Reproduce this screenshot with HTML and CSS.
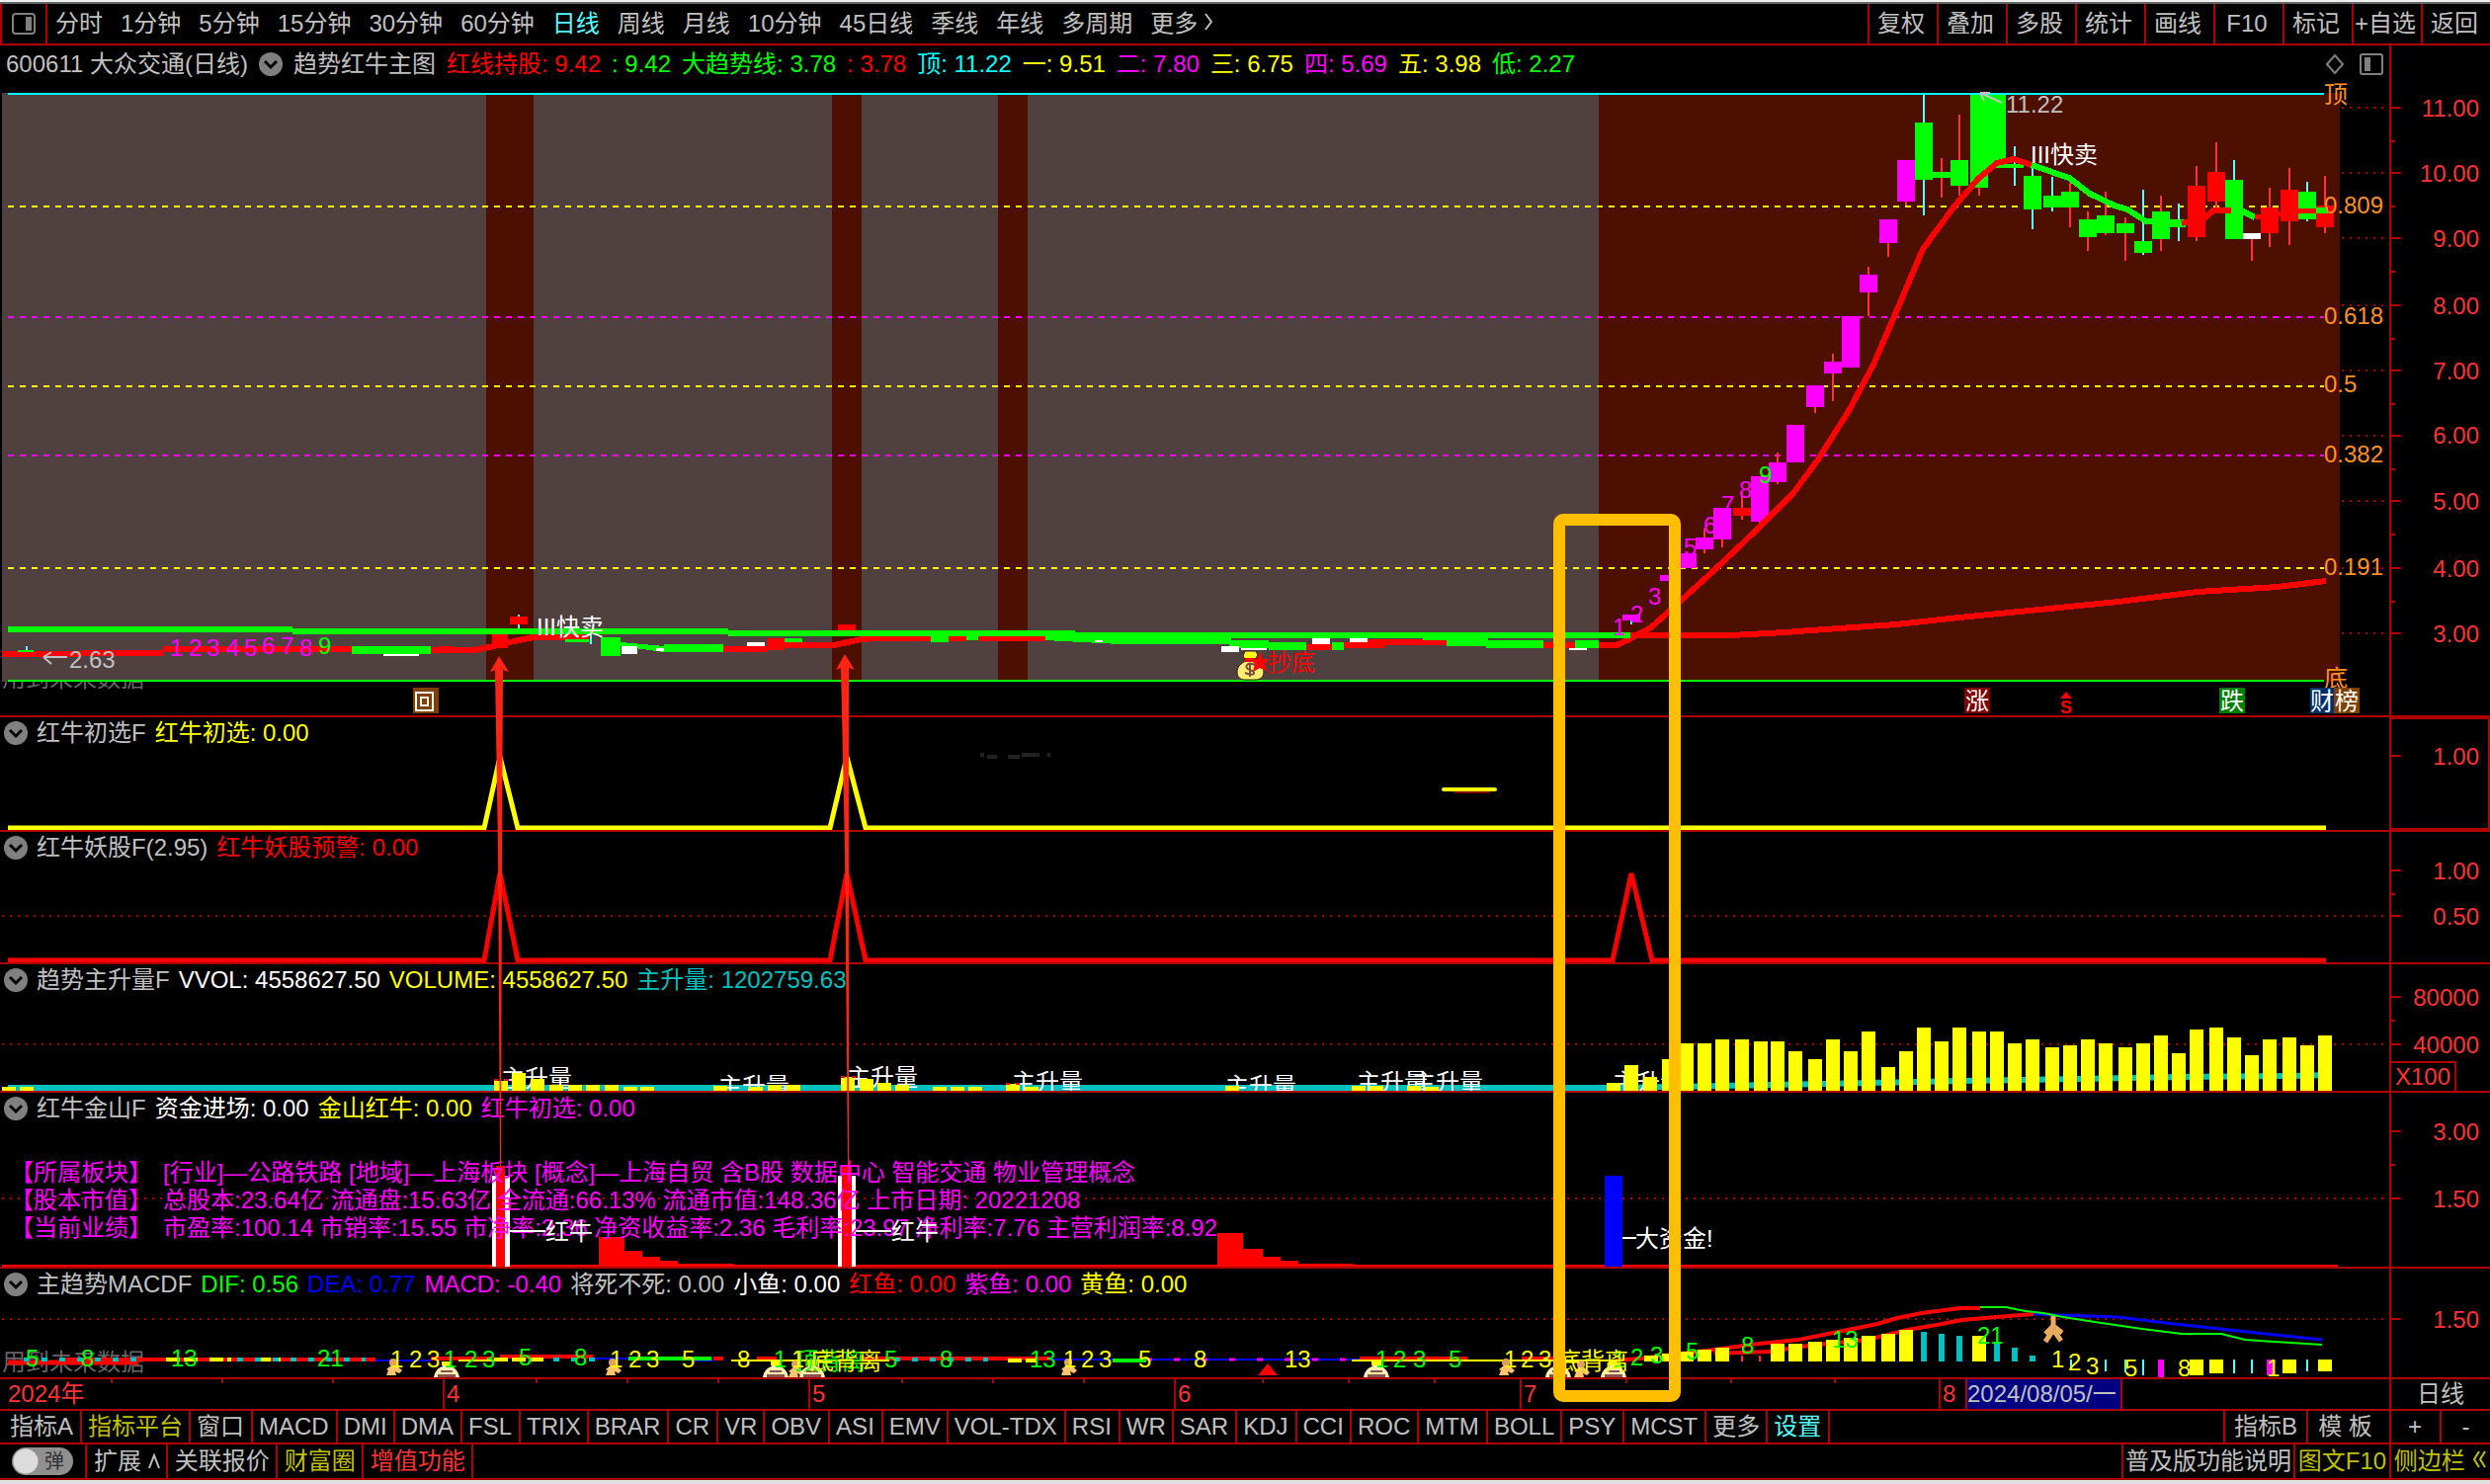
FILE: index.html
```html
<!DOCTYPE html>
<html lang="zh-CN">
<head>
<meta charset="utf-8">
<title>600611 大众交通 日线</title>
<link rel="stylesheet" href="styles.css">
</head>
<body>
<svg class="defs" aria-hidden="true">
  <defs>
    <symbol id="chev" viewBox="0 0 24 24"><circle cx="12" cy="12" r="12" fill="#808080"/><path d="M6 9l6 6 6-6" fill="none" stroke="#000" stroke-width="3"/></symbol>
    <g id="bag">
      <path d="M-6-17h11l2 4-4 6c7 3 10 8 10 11 0 6-4 8-9 8h-10c-5 0-8-3-8-8 0-5 4-9 9-11l-3-5z" fill="#ffee70" stroke="#302010" stroke-width="1"/>
      <path d="M-6-16h10v6h-10z" fill="#ff0"/><path d="M-6-10h10v4h-10z" fill="red"/>
      <path d="M4-3c-8-4-12 3-5 5 7 2 5 7-5 3M-1-5v14" fill="none" stroke="#7c4a40" stroke-width="2"/>
    </g>
    <g id="tee"><path d="M-5 0h10l-1 5c6 2 8 6 9 11h-26c1-5 3-9 9-11z" fill="#fff0b0"/><path d="M-5 0h10v4h-10z" fill="#ff0"/><path d="M-6 9h12v2h-12zM-9 13h18v3h-18z" fill="#8a5050"/></g>
    <g id="man"><circle r="4" cy="3" fill="#e0a060"/><path d="M-2 6h5l6 5-3 3-4-2 1 4h-10l2-5-2-1z" fill="#ffc468"/></g>
  </defs>
</svg>

<div class="strip"></div>
<nav class="toolbar">
  <button class="side" aria-label="侧栏"><svg width="24" height="22" viewBox="0 0 24 22"><rect x="1" y="1" width="22" height="20" rx="3" fill="none" stroke="#808080" stroke-width="2"/><path d="M14 4h6v14h-6z" fill="#808080"/></svg></button>
  <div class="periods">
    <button>分时</button><button>1分钟</button><button>5分钟</button><button>15分钟</button><button>30分钟</button><button>60分钟</button><button class="cyan">日线</button><button>周线</button><button>月线</button><button>10分钟</button><button>45日线</button><button>季线</button><button>年线</button><button>多周期</button><button>更多 <svg width="8" height="20" viewBox="0 0 8 20"><path d="M1 2l6 8-6 8" fill="none" stroke="#c0c0c0" stroke-width="2"/></svg></button>
  </div>
  <div class="tools">
    <button>复权</button><button>叠加</button><button>多股</button><button>统计</button><button>画线</button><button>F10</button><button>标记</button><button>+自选</button><button>返回</button>
  </div>
</nav>

<main class="charts">
<section class="panel main">
  <header class="head">
    <span>600611 大众交通(日线)</span><button aria-label="展开"><svg width="24" height="24"><use href="#chev"/></svg></button><span>趋势红牛主图</span>
    <span class="red">红线持股: 9.42</span><span class="lime">: 9.42</span><span class="lime">大趋势线: 3.78</span><span class="red">: 3.78</span><span class="aqua">顶: 11.22</span><span class="yellow">一: 9.51</span><span class="mag">二: 7.80</span><span class="yellow">三: 6.75</span><span class="mag">四: 5.69</span><span class="yellow">五: 3.98</span><span class="lime">低: 2.27</span>
  </header>
  <svg class="plot" viewBox="0 46 2520 678" preserveAspectRatio="none">
    <text x="2" y="695" fill="#666">用到未来数据</text>
    <rect x="2" y="94" width="2366" height="596" fill="#514040"/>
    <path d="M492 94h48v596h-48zM842 94h30v596h-30zM1010 94h30v596h-30zM1618 94h750v596h-750z" fill="#4d0f00"/>
    <path d="M2370 109h46M2370 175h46M2370 241h46M2370 309h46M2370 375h46M2370 441h46M2370 507h46M2370 575h46M2370 641h46" class="dots"/>
    <path d="M8 209H2352M8 391H2352M8 575H2352" stroke="#ff0" class="dash"/>
    <path d="M8 321H2352M8 461H2352" stroke="#f0f" class="dash"/>
    <path d="M8 95H2352" stroke="#0ff" stroke-width="2"/>
    <path d="M8 689H2352" stroke="#0f0" stroke-width="2"/>

    <g fill="none" shape-rendering="crispEdges">
      <path d="M1725 535V560M1743 540V554M1763 498V526M1781 520V530M1799 458V490M1837 400V418M1855 358V406M1891 270V320M1911 240V260M1929 200V208M1965 160V200M1983 116V198M2003 180V198M2095 185V230M2113 214V254M2131 194V238M2151 220V264M2187 198V254M2223 168V244M2243 144V216M2279 240V264M2297 190V250M2317 170V248M2353 178V236" stroke="#ff3232" stroke-width="2"/>
      <path d="M1651 628V632M1947 96V218M2039 148V188M2057 164V232M2077 179V214M2169 192V258M2205 206V244M2261 162V190M2335 184V224M27 654V660M525 622V636M598 640V652" stroke="#54ffff" stroke-width="2"/>
      <path d="M1651 622V628M1689 582V588M1708 560V575M1725 544V556M1743 514V546M1781 482V528M1799 468V488M1817 430V468M1837 390V412M1855 366V378M1873 320V372M1891 278V296M1911 222V246M1929 162V204" stroke="#f0f" stroke-width="18"/>
      <path d="M1947 124V182M1965 174V180M1983 162V188M2003 96V190M2021 96V170M2039 166V170M2057 178V212M2077 198V210M2095 194V210M2113 222V240M2131 218V236M2151 226V236M2169 244V256M2187 214V242M2203 222V230M2261 182V242M2335 194V222" stroke="#0f0" stroke-width="18"/>
      <path d="M1763 514V522M2223 188V240M2243 174V204M2297 210V236M2317 192V224M2353 208V230M525 624V632M857 632V638" stroke="red" stroke-width="18"/>
      <path d="M2279 236V242" stroke="#fff" stroke-width="18"/>
      <path d="M2344 213H2356M2326 213H2344" stroke="#0f0" stroke-width="6"/>

      <path d="M2 662L165 661M165 657H356M436 658H480L500 654 520 649 540 645H596M732 657H776M794 653H844L872 647 886 646H942M954 646H978M990 646H1058M1322 655H1350M1360 653H1402M1384 650H1464M1562 653H1594M1618 653H1636L1649 647 1671 635 1690 618 1734 578 1777 537 1815 499 1840 465 1871 416 1896 369 1915 325 1946 252 1977 210 2002 181 2021 165 2038 161 2056 167" stroke="red" stroke-width="6"/>
      <path d="M498 656V640H514V656zM506 636h21v6h-21zM776 646h18v12h-18zM444 654h14v4h-14z" fill="red"/>
      <path d="M356 654h80v8h-80zM572 647h24v3h-24zM608 645h20v19h-20zM628 650l44 4v6l-44-6zM672 652h60v8h-60zM794 646h18v4h-18zM942 644h18v6h-18zM978 644h12v4h-12zM1058 644h75l40 4v4h-40l-75-4zM1133 644h113v8h-113zM1244 648h40v8h-40zM1284 650h38v8h-38zM1348 650h12v8h-12zM1440 644h24v4h-24zM1464 646h42v8h-42zM1504 648h58v8h-58zM1594 648h24v8h-24zM18 658h16v2h-16z" fill="#0f0"/>
      <path d="M388 662h36v2h-36zM629 654h16v8h-16zM664 656h8v3h-8zM756 650h18v4h-18zM1108 648h8v2h-8zM1236 654h18v6h-18zM1256 656h26v2h-26zM1328 646h18v6h-18zM1366 646h18v4h-18zM1588 656h18v2h-18z" fill="#fff"/>
      <path d="M2056 167L2094 180 2115 196 2140 208 2153 212 2172 224 2208 226" stroke="#0f0" stroke-width="6"/>
      <path d="M2208 226L2232 220 2240 213H2258" stroke="red" stroke-width="6"/>
      <path d="M2258 213L2270 214 2282 220" stroke="#0f0" stroke-width="6"/>
      <path d="M2282 220L2306 217 2320 213H2344" stroke="red" stroke-width="5"/>
      <path d="M1650 643H1752L1806 640 1847 637 1919 632 1983 625 2064 617 2144 609 2224 599 2305 594 2354 588" stroke="red" stroke-width="6"/>
      <path d="M8 637H296M296 639H737M737 641H1088M1088 643H1650" stroke="#0f0" stroke-width="6"/>
    </g>

    <g fill="#f0f"><text x="172" y="664">1</text><text x="191" y="664">2</text><text x="209" y="664">3</text><text x="229" y="664">4</text><text x="247" y="664">5</text><text x="265" y="662">6</text><text x="284" y="662">7</text><text x="303" y="664">8</text><text x="1632" y="643">1</text><text x="1650" y="630">2</text><text x="1668" y="612">3</text><text x="1704" y="562">5</text><text x="1724" y="540">6</text><text x="1742" y="519">7</text><text x="1760" y="504">8</text></g>
    <g fill="#0f0"><text x="322" y="662">9</text><text x="1780" y="489">9</text></g>
    <g fill="#c0c0c0"><text x="70" y="676">2.63</text><text x="2030" y="114">11.22</text></g>
    <path d="M44 665H68M44 665l8-5M44 665l8 7M2004 94l22 10M2004 94h10M2004 94l4 8" fill="none" stroke="#c0c0c0" stroke-width="2"/>
    <g fill="#fff"><text x="543" y="643">III快卖</text><text x="2055" y="165">III快卖</text></g>
    <use href="#bag" x="1266" y="676"/>
    <path d="M1275 660l3 7 7 0-5 5 3 8-8-4-7 4 2-8-5-5 7 0z" fill="red"/>
    <text x="1283" y="679" fill="red">抄底</text>

    <g fill="#ff9020"><text x="2352" y="104">顶</text><text x="2352" y="216">0.809</text><text x="2352" y="328">0.618</text><text x="2352" y="397">0.5</text><text x="2352" y="468">0.382</text><text x="2352" y="582">0.191</text><text x="2352" y="695">底</text></g>
    <path d="M418 696h26v26h-26z" fill="#804000"/><path d="M421 701h17v18h-17zM426 706h7v8h-7z" fill="none" stroke="#fff" stroke-width="2"/>
    <path d="M1988 696h26v26h-26z" fill="#800000"/><path d="M2246 696h26v26h-26z" fill="#008000"/><path d="M2338 696h24v26h-24z" fill="#003068"/><path d="M2362 696h26v26h-26z" fill="#804000"/>
    <g fill="#fff"><text x="1989" y="718">涨</text><text x="2247" y="718">跌</text><text x="2338" y="718">财</text><text x="2363" y="718">榜</text></g>
    <path d="M2091 700l6 7h-12z" fill="red"/><text x="2085" y="722" class="small" fill="red">S</text>
    <path d="M2363 56l8 9-8 9-8-9z" fill="none" stroke="#808080" stroke-width="2"/>
    <rect x="2389" y="55" width="22" height="20" rx="2" fill="none" stroke="#808080" stroke-width="2"/><path d="M2393 58h6v14h-6z" fill="#808080"/>

    <path d="M2419 46V724" class="axis"/>
    <path d="M2420 109h10M2420 175h10M2420 241h10M2420 309h10M2420 375h10M2420 441h10M2420 507h10M2420 575h10M2420 641h10M2420 143h4M2420 209h4M2420 275h4M2420 343h4M2420 409h4M2420 475h4M2420 541h4M2420 609h4" class="axis"/>
    <g class="ax"><text x="2509" y="118">11.00</text><text x="2509" y="184">10.00</text><text x="2509" y="250">9.00</text><text x="2509" y="318">8.00</text><text x="2509" y="384">7.00</text><text x="2509" y="449">6.00</text><text x="2509" y="516">5.00</text><text x="2509" y="584">4.00</text><text x="2509" y="650">3.00</text></g>
  </svg>
</section>

<section class="panel p2">
  <header class="head"><button aria-label="展开"><svg width="24" height="24"><use href="#chev"/></svg></button><span>红牛初选F</span><span class="yellow">红牛初选: 0.00</span></header>
  <svg class="plot" viewBox="0 726 2520 114" preserveAspectRatio="none">
    <path d="M8 838H490L506 766 524 838H840L857 766 876 838H2354" fill="none" stroke="#ff0" stroke-width="5"/>
    <path d="M992 764h4M999 766h10M1020 766h12M1034 764h18M1060 764h3" stroke="#222" stroke-width="4"/>
    <path d="M1472 802h36" stroke="#800000" stroke-width="2"/><path d="M1461 799h52" stroke="#ff0" stroke-width="4" stroke-linecap="round"/>
    <path d="M2419 727H2519V839H2419z" fill="none" stroke="#b00000" stroke-width="2"/><path d="M2420 765h10" class="axis"/>
    <text x="2509" y="774" class="ax">1.00</text>
  </svg>
</section>

<section class="panel p3">
  <header class="head"><button aria-label="展开"><svg width="24" height="24"><use href="#chev"/></svg></button><span>红牛妖股F(2.95)</span><span class="red">红牛妖股预警: 0.00</span></header>
  <svg class="plot" viewBox="0 842 2520 132" preserveAspectRatio="none">
    <path d="M2 927H2416" class="dots"/>
    <path d="M8 972H490L506 884 524 972H840L857 884 876 972H1632L1651 884 1672 972H2354" fill="none" stroke="red" stroke-width="5"/>
    <path d="M2419 842V974M2420 881h10M2420 905h4M2420 927h10" class="axis"/>
    <g class="ax"><text x="2509" y="890">1.00</text><text x="2509" y="936">0.50</text></g>
  </svg>
</section>

<section class="panel p4">
  <header class="head"><button aria-label="展开"><svg width="24" height="24"><use href="#chev"/></svg></button><span>趋势主升量F</span><span class="white">VVOL: 4558627.50</span><span class="yellow">VOLUME: 4558627.50</span><span class="teal">主升量: 1202759.63</span></header>
  <svg class="plot" viewBox="0 976 2520 128" preserveAspectRatio="none">
    <path d="M2 1057H2416" class="dots"/>
    <path d="M8 1101H1640" stroke="#00c0c0" stroke-width="6"/>
    <path d="M1640 1101L1742 1099 1847 1097 1984 1094 2104 1092 2208 1090 2320 1089 2353 1088" fill="none" stroke="#00c0c0" stroke-width="6"/>
    <g fill="#fff"><text x="507" y="1100">主升量</text><text x="727" y="1108">主升量</text><text x="857" y="1099">主升量</text><text x="1024" y="1104">主升量</text><text x="1240" y="1108">主升量</text><text x="1373" y="1104">主升量</text><text x="1429" y="1104">主升量</text><text x="1632" y="1104">主升量</text></g>
    <path d="M9 1104V1100M27 1104V1100M507 1104V1094M525 1104V1086M544 1104V1092M563 1104V1098M582 1104V1098M600 1104V1098M619 1104V1098M638 1104V1100M655 1104V1100M729 1104V1099M765 1104V1100M784 1104V1098M803 1104V1098M858 1104V1090M877 1104V1092M895 1104V1096M913 1104V1098M951 1104V1100M969 1104V1100M987 1104V1100M1025 1104V1097M1044 1104V1100M1247 1104V1099M1375 1104V1099M1393 1104V1099M1431 1104V1099M1449 1104V1100M1633 1104V1096M1651 1104V1078M1670 1104V1090M1689 1104V1072M1707 1104V1056M1725 1104V1056M1743 1104V1052M1763 1104V1052M1782 1104V1054M1799 1104V1054M1817 1104V1064M1837 1104V1072M1855 1104V1052M1873 1104V1064M1891 1104V1044M1911 1104V1080M1929 1104V1064M1947 1104V1040M1965 1104V1054M1983 1104V1040M2003 1104V1044M2021 1104V1044M2039 1104V1056M2057 1104V1052M2077 1104V1060M2095 1104V1058M2113 1104V1052M2131 1104V1056M2151 1104V1060M2169 1104V1056M2187 1104V1048M2205 1104V1066M2223 1104V1042M2243 1104V1040M2261 1104V1050M2279 1104V1068M2297 1104V1052M2317 1104V1050M2335 1104V1058M2353 1104V1048" stroke="#ff0" stroke-width="14"/>
    <path d="M500 1093h4M511 1093h4M851 1090h4M862 1090h4M1018 1097h4M1028 1097h4" stroke="red" stroke-width="2"/>
    <path d="M2419 976V1104M2420 1009h10M2420 1033h4M2420 1057h10M2420 1075H2485V1104" class="axis"/>
    <g class="ax"><text x="2509" y="1018">80000</text><text x="2509" y="1066">40000</text><text x="2480" y="1098">X100</text></g>
  </svg>
</section>

<section class="panel p5">
  <header class="head"><button aria-label="展开"><svg width="24" height="24"><use href="#chev"/></svg></button><span>红牛金山F</span><span class="white">资金进场: 0.00</span><span class="yellow">金山红牛: 0.00</span><span class="mag">红牛初选: 0.00</span></header>
  <svg class="plot" viewBox="0 1106 2520 176" preserveAspectRatio="none">
    <path d="M2 1213H2416" class="dots"/>
    <path d="M2 1281H2366" stroke="red" stroke-width="2"/>
    <path d="M606 1252h26v14h18v6h18v4h18v3h56v3H606zM1232 1248h26v16h20v8h18v4h18v3h56v3H1232z" fill="red"/>
    <path d="M498 1190h18v92h-18zM848 1190h18v92h-18z" fill="#fff"/><path d="M502 1180h9v102h-9zM852 1180h10v102h-10z" fill="red"/>
    <g fill="#f0f"><text x="10" y="1195">【所属板块】</text><text x="165" y="1195">[行业]—公路铁路 [地域]—上海板块 [概念]—上海自贸 含B股 数据中心 智能交通 物业管理概念</text><text x="10" y="1223">【股本市值】</text><text x="165" y="1223">总股本:23.64亿 流通盘:15.63亿 全流通:66.13% 流通市值:148.36亿 上市日期: 20221208</text><text x="10" y="1251">【当前业绩】</text><text x="165" y="1251">市盈率:100.14 市销率:15.55 市净率:2.36 净资收益率:2.36 毛利率:23.97 净利率:7.76 主营利润率:8.92</text></g>
    <path d="M1624 1190h18v92h-18z" fill="#00f"/>
    <path d="M516 1246h36M866 1246h36M1642 1253h14" stroke="#fff" stroke-width="2"/>
    <g fill="#fff"><text x="552" y="1255">红牛</text><text x="902" y="1255">红牛</text><text x="1655" y="1262">大资金!</text></g>
    <path d="M2419 1106V1282M2420 1145h10M2420 1179h4M2420 1213h10" class="axis"/>
    <g class="ax"><text x="2509" y="1154">3.00</text><text x="2509" y="1222">1.50</text></g>
  </svg>
</section>

<section class="panel p6">
  <header class="head"><button aria-label="展开"><svg width="24" height="24"><use href="#chev"/></svg></button><span>主趋势MACDF</span><span class="lime">DIF: 0.56</span><span class="blue">DEA: 0.77</span><span class="mag">MACD: -0.40</span><span>将死不死: 0.00</span><span class="white">小鱼: 0.00</span><span class="red">红鱼: 0.00</span><span class="mag">紫鱼: 0.00</span><span class="yellow">黄鱼: 0.00</span></header>
  <svg class="plot" viewBox="0 1284 2520 110" preserveAspectRatio="none">
    <path d="M2 1335H2416" class="dots"/>
    <text x="2" y="1387" fill="#666">用到未来数据</text>
    <path d="M64 1376H380M436 1375H500M506 1373H600M722 1375H732M766 1375H786M870 1375H1062M1376 1375H1485M1540 1375H1585" stroke="red" stroke-width="4"/>
    <path d="M8 1379H140" stroke="red" stroke-width="5"/>
    <path d="M380 1377H436M600 1375H640M700 1377H722M1062 1376H1376M1585 1377H1640" stroke="#00f" stroke-width="2"/>
    <path d="M464 1377H500M740 1377H900M1368 1377H1640" stroke="#ff0" stroke-width="2"/>
    <path d="M168 1376h36M212 1376h22M260 1376h24M500 1376h52M1020 1377h30" stroke="#ff0" stroke-width="4" stroke-dasharray="14 4"/>
    <path d="M24 1376H140M240 1376H370M560 1376H602M905 1376H1000" stroke="#00c0c0" stroke-width="4" stroke-dasharray="6 12"/>
    <path d="M636 1375H720M1126 1377H1160" stroke="#0f0" stroke-width="4"/>
    <path d="M1160 1376H1380" stroke="#f0f" stroke-width="3" stroke-dasharray="6 22"/>
    <use href="#man" x="398" y="1376"/><use href="#tee" x="452" y="1378"/><use href="#man" x="620" y="1376"/><use href="#tee" x="785" y="1378"/><use href="#man" x="805" y="1378"/><use href="#tee" x="822" y="1378"/><use href="#man" x="1081" y="1376"/><use href="#tee" x="1393" y="1378"/><use href="#man" x="1524" y="1376"/><use href="#tee" x="1577" y="1378"/><use href="#man" x="1600" y="1378"/><use href="#tee" x="1633" y="1378"/>
    <path d="M1283 1380l10 12h-20z" fill="red"/>
    <path d="M1635 1377L1660 1375 1735 1366 1750 1364 1780 1360 1820 1356 1850 1350 1900 1340 1920 1334 1945 1329 1960 1327 1984 1324H2004M1735 1370L1790 1368 1830 1362 1890 1356 1930 1346 1960 1341 1985 1336 2020 1333 2058 1330" fill="none" stroke="red" stroke-width="4"/>
    <path d="M2058 1330L2084 1331 2144 1333 2192 1339 2256 1346 2350 1356" fill="none" stroke="#00f" stroke-width="3"/>
    <path d="M2004 1323H2030L2050 1327 2068 1329 2088 1333 2120 1338 2168 1345 2208 1350H2248L2272 1356 2350 1361" fill="none" stroke="#0f0" stroke-width="2"/>
    <path d="M1671 1378V1372M1689 1378V1370M1707 1378V1368M1725 1378V1366M1743 1378V1364M1799 1378V1360M1817 1378V1360M1837 1378V1358M1855 1378V1356M1873 1378V1354M1891 1378V1352M1911 1378V1350M1929 1378V1346M2003 1378V1352M2223 1376V1392M2243 1376V1390M2317 1376V1390M2353 1376V1388" stroke="#ff0" stroke-width="14"/>
    <path d="M1947 1378V1348M1965 1378V1350M1983 1378V1352M2021 1378V1358M2039 1378V1364M2057 1378V1372" stroke="#00c0c0" stroke-width="6"/>
    <path d="M2096 1376V1384M2131 1376V1388M2151 1376V1389M2169 1376V1392M2261 1376V1390M2279 1376V1390M2335 1376V1388" stroke="#54ffff" stroke-width="2"/>
    <path d="M1763 1372V1378M1781 1372V1378" stroke="#ff3232" stroke-width="2"/>
    <path d="M2187 1376V1394M2297 1376V1392" stroke="#f0f" stroke-width="6"/>
    <g fill="#0f0"><text x="26" y="1383">5</text><text x="82" y="1383">8</text><text x="173" y="1383">13</text><text x="321" y="1383">21</text><text x="449" y="1384">1</text><text x="470" y="1384">2</text><text x="488" y="1384">3</text><text x="525" y="1382">5</text><text x="581" y="1382">8</text><text x="783" y="1384">1</text><text x="804" y="1386">顶背离</text><text x="895" y="1384">5</text><text x="951" y="1384">8</text><text x="1042" y="1384">13</text><text x="1392" y="1384">1</text><text x="1410" y="1384">2</text><text x="1430" y="1384">3</text><text x="1466" y="1384">5</text><text x="1632" y="1384">1</text><text x="1650" y="1382">2</text><text x="1670" y="1380">3</text><text x="1706" y="1376">5</text><text x="1762" y="1370">8</text><text x="1854" y="1364">13</text><text x="2001" y="1360">21</text></g>
    <g fill="#ff0"><text x="395" y="1384">1</text><text x="414" y="1384">2</text><text x="432" y="1384">3</text><text x="617" y="1384">1</text><text x="636" y="1384">2</text><text x="654" y="1384">3</text><text x="690" y="1384">5</text><text x="746" y="1384">8</text><text x="801" y="1384">1</text><text x="820" y="1386">底背离</text><text x="1076" y="1384">1</text><text x="1094" y="1384">2</text><text x="1112" y="1384">3</text><text x="1152" y="1384">5</text><text x="1208" y="1384">8</text><text x="1300" y="1384">13</text><text x="1522" y="1384">1</text><text x="1539" y="1384">2</text><text x="1557" y="1384">3</text><text x="1576" y="1386">底背离</text><text x="2076" y="1384">1</text><text x="2093" y="1387">2</text><text x="2111" y="1391">3</text><text x="2150" y="1393">5</text><text x="2204" y="1393">8</text><text x="2294" y="1393">1</text></g>
    <path d="M2078 1332v10M2078 1342l-8 8M2078 1342l9 7M2078 1346l-8 12M2078 1346l8 11" fill="none" stroke="#e8ac60" stroke-width="5"/>
    <path d="M2419 1284V1394M2420 1335h10" class="axis"/>
    <text x="2509" y="1344" class="ax">1.50</text>
  </svg>
</section>

<div class="timeline">
  <span>2024年</span><span>4</span><span>5</span><span>6</span><span>7</span><span class="m8">8</span><time>2024/08/05/一</time><span class="rest"></span><span class="unit">日线</span>
</div>

<svg class="overlay" viewBox="0 46 2520 1382" preserveAspectRatio="none">
  <path d="M505 664l10 16-6-2-1 182-1 320h-1l-2-320-3-182-5 2zM855 662l10 16-6-2 0 184-0 320h-1l-3-320-4-184-5 2z" fill="#ff2414"/>
  <rect x="1578" y="526" width="117" height="887" rx="4" fill="none" stroke="#ffbf00" stroke-width="12"/>
</svg>
</main>

<nav class="tabs">
  <button class="first">指标A</button><button class="gold">指标平台</button><button>窗口</button><button>MACD</button><button>DMI</button><button>DMA</button><button>FSL</button><button>TRIX</button><button>BRAR</button><button>CR</button><button>VR</button><button>OBV</button><button>ASI</button><button>EMV</button><button>VOL-TDX</button><button>RSI</button><button>WR</button><button>SAR</button><button>KDJ</button><button>CCI</button><button>ROC</button><button>MTM</button><button>BOLL</button><button>PSY</button><button>MCST</button><button>更多</button><button class="cyan">设置</button>
  <span class="fill"></span><button class="b">指标B</button><button class="b">模 板</button><button class="pm">+</button><button class="pm">-</button>
</nav>
<footer class="foot">
  <label class="switch"><input type="checkbox"><span>弹</span></label><button>扩展 <svg width="12" height="16" viewBox="0 0 12 16"><path d="M1 15L6 2l5 13" fill="none" stroke="#c0c0c0" stroke-width="2"/></svg></button><button>关联报价</button><button class="gold">财富圈</button><button class="hot">增值功能</button>
  <span class="fill"></span><button class="tight">普及版功能说明</button><button class="gold tight">图文F10</button><button class="gold last">侧边栏 <svg width="16" height="20" viewBox="0 0 16 20"><path d="M8 2L3 10l5 8M14 2L9 10l5 8" fill="none" stroke="#c0c000" stroke-width="2"/></svg></button>
</footer>
</body>
</html>
```
FILE: styles.css
```css
* { box-sizing: border-box; }
body {
  margin: 0;
  height: 100vh;
  display: flex;
  flex-direction: column;
  background: #000;
  border-bottom: 4px solid #e0e0e0;
  color: #c0c0c0;
  font: 24px/30px "Liberation Sans", "Noto Sans CJK SC", sans-serif;
  overflow: hidden;
}
button {
  font: inherit;
  color: inherit;
  background: none;
  border: 0;
  padding: 0;
  white-space: nowrap;
  flex: none;
}
.defs { display: none; }
.strip { height: 4px; flex: none; background: #666; border-top: 2px solid #eceef0; }

.toolbar { display: flex; height: 42px; flex: none; border-bottom: 2px solid #b00000; }
.side { width: 48px; border: solid #b00000; border-width: 0 2px; display: grid; place-items: center; }
.periods { display: flex; gap: 18px; padding-left: 8px; flex: 1; }
.tools { display: flex; }
.tools button { width: 70px; padding-right: 4px; border-left: 2px solid #b00000; }

.charts {
  flex: 1;
  min-height: 0;
  position: relative;
  display: grid;
  grid-template-rows: 680fr 116fr 134fr 130fr 178fr 112fr 32px;
}
.panel {
  display: grid;
  grid-template: minmax(0, 1fr) / minmax(0, 1fr);
  min-height: 0;
  border-bottom: 2px solid #b00000;
}
.head, .plot { grid-area: 1 / 1; }
.head {
  display: flex;
  align-items: center;
  align-self: start;
  gap: 9px;
  height: 32px;
  padding-left: 4px;
  white-space: nowrap;
  z-index: 1;
}
.main .head { height: 37px; gap: 11px; padding-left: 6px; }
.head button { display: grid; }
.plot { width: 100%; height: 100%; overflow: hidden; }
.dots { stroke: #b00000; stroke-width: 2; stroke-dasharray: 2 6; fill: none; }
.dash { stroke-width: 2; stroke-dasharray: 6 6; fill: none; }
.axis { stroke: #b00000; stroke-width: 2; fill: none; }
.ax { fill: #ff3232; text-anchor: end; }
.small { font-size: 18px; font-weight: bold; }
.overlay { position: absolute; inset: 0; width: 100%; height: 100%; pointer-events: none; z-index: 2; }

.timeline {
  display: grid;
  grid-template-columns: 448fr 370fr 370fr 350fr 424fr 27fr 157fr 272fr 102fr;
  border-bottom: 2px solid #b00000;
  color: #ff3232;
}
.timeline span { border-left: 2px solid #b00000; padding-left: 2px; }
.timeline span:first-child { border: 0; padding-left: 8px; }
.timeline span:nth-child(-n+5) {
  background: linear-gradient(90deg, transparent 25%, #b00000 25% calc(25% + 2px), transparent calc(25% + 2px) 50%, #b00000 50% calc(50% + 2px), transparent calc(50% + 2px) 75%, #b00000 75% calc(75% + 2px), transparent calc(75% + 2px)) 0 0 / 100% 4px no-repeat;
}
.timeline time { background: #000080; color: #c0c0c0; border-left: 2px solid #b00000; white-space: nowrap; }
.timeline .unit { color: #c0c0c0; text-align: center; padding: 0; }

.tabs, .foot { display: flex; flex: none; border-bottom: 2px solid #b00000; }
.tabs { height: 34px; }
.foot { height: 36px; }
.tabs button { padding: 0 6px; border-right: 2px solid #b00000; }
.tabs button:nth-child(3n), .tabs button:nth-child(3n+1) { padding-right: 7px; }
.tabs .first { padding-left: 10px; }
.fill { flex: 1; }
.tabs .b { width: 84px; border-right: 0; border-left: 2px solid #b00000; padding: 0; }
.tabs .pm { width: 51px; border-right: 0; border-left: 2px solid #b00000; }
.foot button { padding: 0 6px 0 7px; border-right: 2px solid #b00000; }
.foot .tight { padding: 0 2px; border-left: 2px solid #b00000; border-right: 0; }
.foot .tight.gold { width: 97px; }
.foot .last { width: 102px; padding: 0; border-left: 2px solid #b00000; border-right: 0; }
.switch { width: 88px; flex: none; border-right: 2px solid #b00000; display: grid; place-items: center; }
.switch input, .switch span { grid-area: 1 / 1; }
.switch input {
  appearance: none;
  margin: 0;
  width: 62px;
  height: 28px;
  border-radius: 14px;
  background: radial-gradient(circle at 14px 14px, #dcdcdc 12px, transparent 13px) #909090;
}
.switch span { color: #303030; font-size: 20px; padding-left: 24px; z-index: 1; }

.red { color: #f00; }
.lime { color: #0f0; }
.aqua { color: #0ff; }
.yellow { color: #ff0; }
.mag { color: #f0f; }
.white { color: #fff; }
.teal { color: #00c0c0; }
.blue { color: #00f; }
.cyan { color: #54ffff; }
.gold { color: #c0c000; }
.hot { color: #ff3232; }
```
